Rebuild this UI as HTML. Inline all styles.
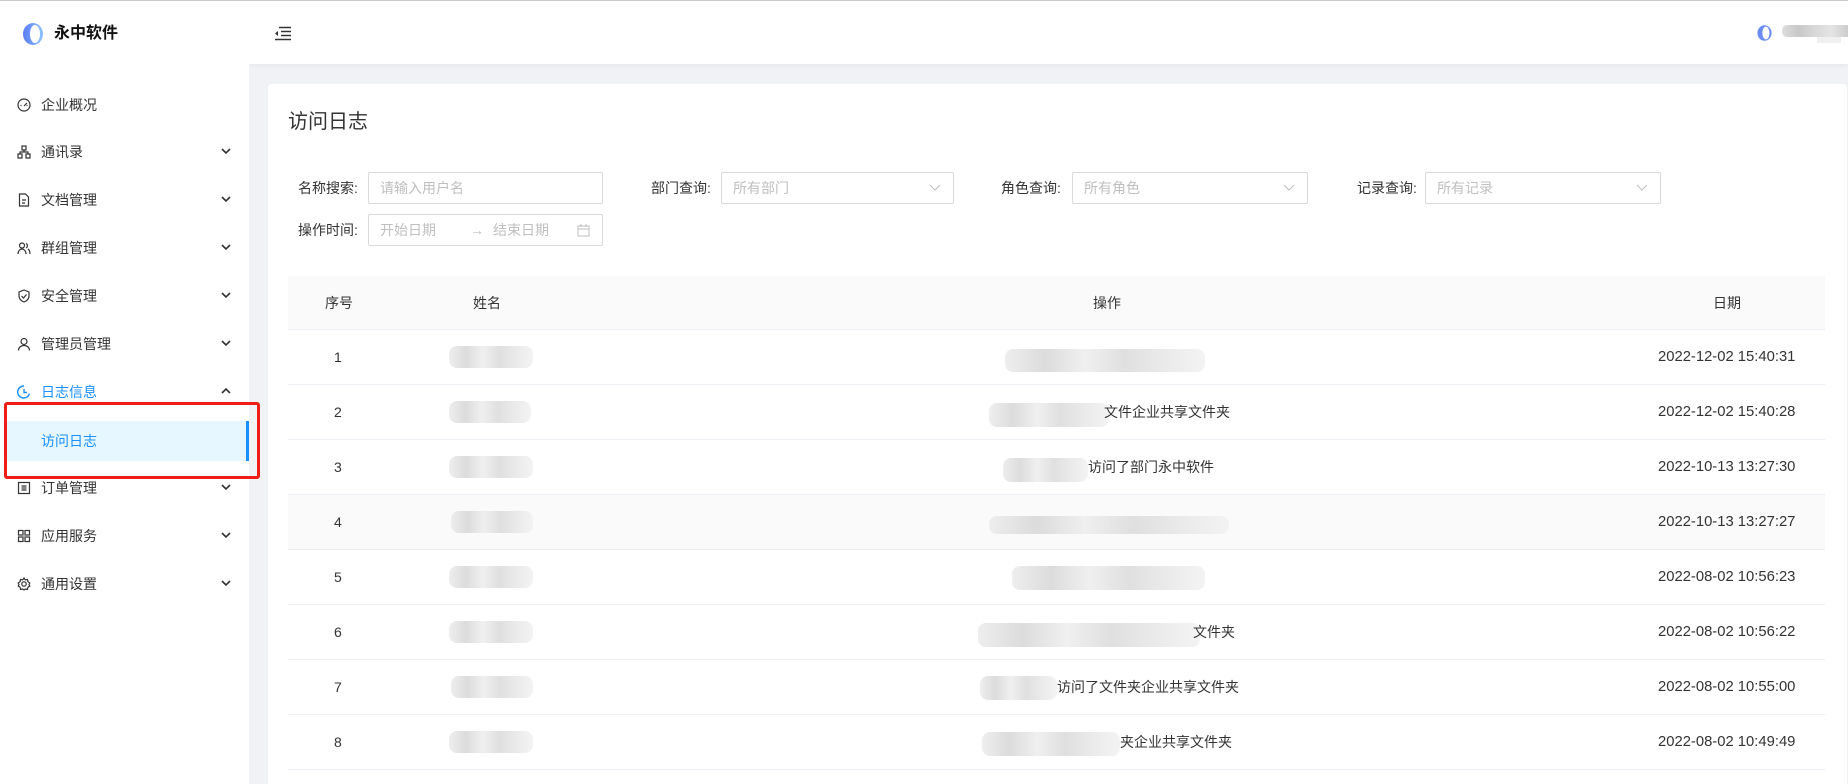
<!DOCTYPE html>
<html style="overflow:hidden;height:784px"><head><meta charset="utf-8"><style>
*{margin:0;padding:0;box-sizing:border-box}
body{width:1848px;height:784px;overflow:hidden;background:#f0f2f5;font-family:"Liberation Sans","Noto Sans CJK SC",sans-serif;font-size:14px;color:#333;position:relative}
.abs{position:absolute}
.topline{left:0;top:0;width:1848px;height:1px;background:#c8c8c8;z-index:5}
.side{left:0;top:0;width:249px;height:784px;background:#fff;z-index:2}
.header{left:249px;top:0;width:1599px;height:64px;background:#fff;box-shadow:0 1px 4px rgba(0,21,41,.06)}
.card{left:268px;top:84px;width:1579px;height:700px;background:#fff;border-radius:4px 4px 0 0}
.mi{position:absolute;left:0;width:249px;height:20px;line-height:20px}
.mi .ic{position:absolute;left:17px;top:3px;width:14px;height:14px}
.mi .t{position:absolute;left:41px;top:0;font-size:14px;color:#333}
.mi .ar{position:absolute;left:220px;top:3px;width:12px;height:12px}
.lbl{position:absolute;font-size:14px;color:#333;line-height:20px}
.inp{position:absolute;height:32px;border:1px solid #d9d9d9;border-radius:2px;background:#fff;color:#bfbfbf;font-size:14px;line-height:30px;padding-left:11px}
.row{position:absolute;left:288px;width:1537px;height:55px;border-bottom:1px solid #ebeef2}
.c{position:absolute;top:0;line-height:54px;font-size:14px;color:#333}
.d{font-size:14.8px}
.bl{position:absolute;height:22px;border-radius:8px;background:linear-gradient(90deg,#ececec,#d8d8d8 20%,#eeeeee 40%,#dcdcdc 60%,#e8e8e8 80%,#f2f2f2);opacity:.9}
</style></head><body>
<div class="abs topline"></div>
<div class="abs side">
  <svg class="abs" style="left:21px;top:22px" width="24" height="24" viewBox="0 0 24 24"><defs><linearGradient id="g" x1="0" x2="1"><stop offset="0" stop-color="#5b7cf5"/><stop offset="1" stop-color="#8fc3ff"/></linearGradient></defs><ellipse cx="12" cy="12" rx="10" ry="11" fill="url(#g)"/><ellipse cx="14" cy="12" rx="5" ry="9" fill="#fff"/></svg>
  <div class="abs" style="left:54px;top:22px;font-size:16px;font-weight:bold;color:#111;line-height:24px">永中软件</div>
  <div class="mi" style="top:95px"><svg class="ic" viewBox="0 0 14 14" fill="none" stroke="#333" stroke-width="1.2"><circle cx="7" cy="7" r="6"/><path d="M7 8l3-3M3.5 7.5h1M9.5 7.5h1"/></svg><span class="t">企业概况</span></div>
  <div class="mi" style="top:142px"><svg class="ic" viewBox="0 0 14 14" fill="none" stroke="#333" stroke-width="1.2"><rect x="5" y="1" width="4" height="4"/><rect x="1" y="9" width="4" height="4"/><rect x="9" y="9" width="4" height="4"/><path d="M7 5v2M3 9V7h8v2"/></svg><span class="t">通讯录</span><svg class="ar" viewBox="0 0 12 12" fill="none" stroke="#333" stroke-width="1.6"><path d="M2 4l4 4 4-4"/></svg></div>
  <div class="mi" style="top:190px"><svg class="ic" viewBox="0 0 14 14" fill="none" stroke="#333" stroke-width="1.2"><path d="M2.5 1h6l3 3v9h-9z M5 7h4M5 10h3"/></svg><span class="t">文档管理</span><svg class="ar" viewBox="0 0 12 12" fill="none" stroke="#333" stroke-width="1.6"><path d="M2 4l4 4 4-4"/></svg></div>
  <div class="mi" style="top:238px"><svg class="ic" viewBox="0 0 14 14" fill="none" stroke="#333" stroke-width="1.2"><circle cx="5" cy="4.5" r="2.5"/><path d="M1 13c0-3 2-5 4-5s4 2 4 5M9 2.5a2.5 2.5 0 010 4.5M11 8c1.5 1 2 3 2 5"/></svg><span class="t">群组管理</span><svg class="ar" viewBox="0 0 12 12" fill="none" stroke="#333" stroke-width="1.6"><path d="M2 4l4 4 4-4"/></svg></div>
  <div class="mi" style="top:286px"><svg class="ic" viewBox="0 0 14 14" fill="none" stroke="#333" stroke-width="1.2"><path d="M7 1l5 2v4c0 3-2.5 5-5 6-2.5-1-5-3-5-6V3z M4.5 7l2 2 3-3.5"/></svg><span class="t">安全管理</span><svg class="ar" viewBox="0 0 12 12" fill="none" stroke="#333" stroke-width="1.6"><path d="M2 4l4 4 4-4"/></svg></div>
  <div class="mi" style="top:334px"><svg class="ic" viewBox="0 0 14 14" fill="none" stroke="#333" stroke-width="1.2"><circle cx="7" cy="4.5" r="3"/><path d="M1.5 13.5c0-3 2.5-5 5.5-5s5.5 2 5.5 5"/></svg><span class="t">管理员管理</span><svg class="ar" viewBox="0 0 12 12" fill="none" stroke="#333" stroke-width="1.6"><path d="M2 4l4 4 4-4"/></svg></div>
  <div class="mi" style="top:382px"><svg class="ic" viewBox="0 0 14 14" fill="none" stroke="#1890ff" stroke-width="1.4"><path d="M12.5 8.5A6 6 0 117 1M7 4v3.5h3"/></svg><span class="t" style="color:#1890ff">日志信息</span><svg class="ar" viewBox="0 0 12 12" fill="none" stroke="#333" stroke-width="1.6"><path d="M2 8l4-4 4 4"/></svg></div>
  <div class="abs" style="left:4px;top:421px;width:245px;height:40px;background:#e6f7ff"></div>
  <div class="abs" style="left:246px;top:421px;width:3px;height:40px;background:#1890ff"></div>
  <div class="abs" style="left:41px;top:431px;font-size:14px;color:#1890ff;line-height:20px">访问日志</div>
  <div class="mi" style="top:478px"><svg class="ic" viewBox="0 0 14 14" fill="none" stroke="#333" stroke-width="1.2"><rect x="1.5" y="1.5" width="11" height="11"/><path d="M4.5 5h5M4.5 7h5M4.5 9h5"/></svg><span class="t">订单管理</span><svg class="ar" viewBox="0 0 12 12" fill="none" stroke="#333" stroke-width="1.6"><path d="M2 4l4 4 4-4"/></svg></div>
  <div class="mi" style="top:526px"><svg class="ic" viewBox="0 0 14 14" fill="none" stroke="#333" stroke-width="1.2"><rect x="1.5" y="1.5" width="4.5" height="4.5"/><rect x="8" y="1.5" width="4.5" height="4.5"/><rect x="1.5" y="8" width="4.5" height="4.5"/><rect x="8" y="8" width="4.5" height="4.5"/></svg><span class="t">应用服务</span><svg class="ar" viewBox="0 0 12 12" fill="none" stroke="#333" stroke-width="1.6"><path d="M2 4l4 4 4-4"/></svg></div>
  <div class="mi" style="top:574px"><svg class="ic" viewBox="0 0 14 14" fill="none" stroke="#333" stroke-width="1.2"><circle cx="7" cy="7" r="2.2"/><path d="M7 1l1.3 1.8 2.2-.4.4 2.2L12.8 6 12 7.5l.8 1.6-1.9 1.1-.4 2.2-2.2-.4L7 13l-1.3-1-2.2.4-.4-2.2L1.2 9 2 7.5 1.2 6l1.9-1.4.4-2.2 2.2.4z"/></svg><span class="t">通用设置</span><svg class="ar" viewBox="0 0 12 12" fill="none" stroke="#333" stroke-width="1.6"><path d="M2 4l4 4 4-4"/></svg></div>
</div>
<div class="abs" style="left:4px;top:402px;width:256px;height:77px;border:3px solid #f01c16;border-radius:3px;z-index:3"></div>
<div class="abs header">
  <svg class="abs" style="left:25px;top:26px" width="18" height="15" viewBox="0 0 18 15" fill="none" stroke="#333" stroke-width="1.6"><path d="M5 1.5h12M7 5.5h10M7 9.5h10M1 13.5h16"/><path d="M1 7.5l3-2.5v5z" fill="#333" stroke="none"/></svg>
  <svg class="abs" style="left:1507px;top:24px" width="17" height="18" viewBox="0 0 24 24"><ellipse cx="12" cy="12" rx="10" ry="11" fill="#6b8cf7"/><ellipse cx="14" cy="12" rx="5" ry="9" fill="#fff"/></svg>
  <div class="abs" style="left:1533px;top:25px;width:66px;height:12px;background:linear-gradient(90deg,#ddd,#c8c8c8,#d8d8d8,#e4e4e4,#ccc);border-radius:5px 0 0 5px"></div>
  <div class="abs" style="left:1568px;top:37px;width:24px;height:6px;background:#f0f0f0"></div>
</div>
<div class="abs card"></div>
<div class="abs" style="left:288px;top:108px;font-size:20px;color:#333;line-height:28px">访问日志</div>
<span class="lbl" style="left:298px;top:178px">名称搜索:</span>
<div class="inp" style="left:368px;top:172px;width:235px">请输入用户名</div>
<span class="lbl" style="left:651px;top:178px">部门查询:</span>
<div class="inp" style="left:721px;top:172px;width:233px">所有部门<svg class="abs" style="right:12px;top:11px" width="12" height="8" viewBox="0 0 12 8" fill="none" stroke="#bfbfbf" stroke-width="1"><path d="M1 1l5 5 5-5"/></svg></div>
<span class="lbl" style="left:1001px;top:178px">角色查询:</span>
<div class="inp" style="left:1072px;top:172px;width:236px">所有角色<svg class="abs" style="right:12px;top:11px" width="12" height="8" viewBox="0 0 12 8" fill="none" stroke="#bfbfbf" stroke-width="1"><path d="M1 1l5 5 5-5"/></svg></div>
<span class="lbl" style="left:1357px;top:178px">记录查询:</span>
<div class="inp" style="left:1425px;top:172px;width:236px">所有记录<svg class="abs" style="right:12px;top:11px" width="12" height="8" viewBox="0 0 12 8" fill="none" stroke="#bfbfbf" stroke-width="1"><path d="M1 1l5 5 5-5"/></svg></div>
<span class="lbl" style="left:298px;top:220px">操作时间:</span>
<div class="inp" style="left:368px;top:214px;width:235px">开始日期<span class="abs" style="left:101px;top:0;color:#bfbfbf">→</span><span class="abs" style="left:124px;top:0">结束日期</span><svg class="abs" style="left:208px;top:9px" width="13" height="13" viewBox="0 0 13 13" fill="none" stroke="#bfbfbf" stroke-width="1"><rect x="1" y="2" width="11" height="10"/><path d="M1 5h11M4 0v3M9 0v3"/></svg></div>

<div class="abs" style="left:288px;top:276px;width:1537px;height:54px;background:#fafafa;border-bottom:1px solid #ebeef2">
  <span class="c" style="left:37px">序号</span><span class="c" style="left:185px">姓名</span><span class="c" style="left:805px">操作</span><span class="c" style="left:1425px">日期</span>
</div>

<div class="row" style="top:330px"><span class="c" style="left:46px">1</span><div class="bl" style="left:161px;top:16px;width:84px"></div><div class="bl" style="left:717px;top:19px;width:200px;height:23px"></div><span class="c d" style="left:1370px">2022-12-02 15:40:31</span></div>
<div class="row" style="top:385px"><span class="c" style="left:46px">2</span><div class="bl" style="left:161px;top:16px;width:82px"></div><div class="bl" style="left:701px;top:18px;width:120px;height:24px"></div><span class="c" style="left:816px">文件企业共享文件夹</span><span class="c d" style="left:1370px">2022-12-02 15:40:28</span></div>
<div class="row" style="top:440px"><span class="c" style="left:46px">3</span><div class="bl" style="left:161px;top:16px;width:84px"></div><div class="bl" style="left:715px;top:18px;width:85px;height:24px"></div><span class="c" style="left:800px">访问了部门永中软件</span><span class="c d" style="left:1370px">2022-10-13 13:27:30</span></div>
<div class="row" style="top:495px;background:#fafafa"><span class="c" style="left:46px">4</span><div class="bl" style="left:163px;top:16px;width:82px"></div><div class="bl" style="left:701px;top:21px;width:240px;height:18px"></div><span class="c d" style="left:1370px">2022-10-13 13:27:27</span></div>
<div class="row" style="top:550px"><span class="c" style="left:46px">5</span><div class="bl" style="left:161px;top:16px;width:84px"></div><div class="bl" style="left:724px;top:16px;width:193px;height:24px"></div><span class="c d" style="left:1370px">2022-08-02 10:56:23</span></div>
<div class="row" style="top:605px"><span class="c" style="left:46px">6</span><div class="bl" style="left:161px;top:16px;width:84px"></div><div class="bl" style="left:690px;top:18px;width:222px;height:24px"></div><span class="c" style="left:905px">文件夹</span><span class="c d" style="left:1370px">2022-08-02 10:56:22</span></div>
<div class="row" style="top:660px"><span class="c" style="left:46px">7</span><div class="bl" style="left:163px;top:16px;width:82px"></div><div class="bl" style="left:692px;top:16px;width:77px;height:24px"></div><span class="c" style="left:769px">访问了文件夹企业共享文件夹</span><span class="c d" style="left:1370px">2022-08-02 10:55:00</span></div>
<div class="row" style="top:715px"><span class="c" style="left:46px">8</span><div class="bl" style="left:161px;top:16px;width:84px"></div><div class="bl" style="left:694px;top:17px;width:138px;height:24px"></div><span class="c" style="left:832px">夹企业共享文件夹</span><span class="c d" style="left:1370px">2022-08-02 10:49:49</span></div>
</body></html>
